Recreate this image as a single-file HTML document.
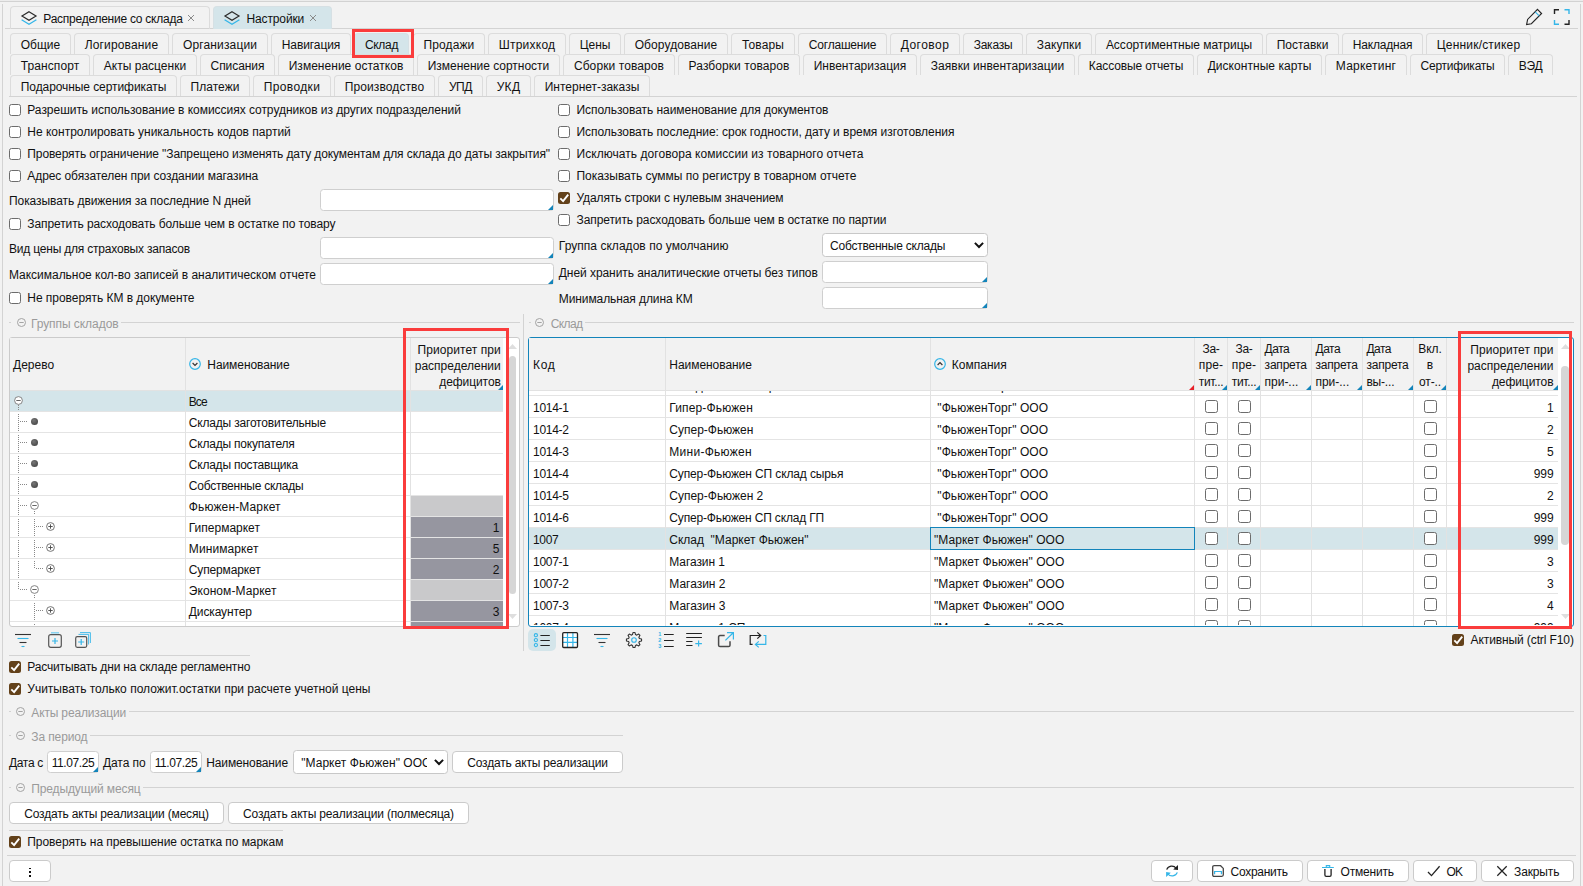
<!DOCTYPE html><html lang="ru"><head><meta charset="utf-8"><title>Настройки</title><style>
*{box-sizing:border-box;margin:0;padding:0}
html,body{width:1583px;height:886px;overflow:hidden;background:#f2f2f2;}
body{position:relative;font-family:"Liberation Sans",sans-serif;font-size:12px;color:#111;letter-spacing:-0.08px}
.a{position:absolute}
.t{position:absolute;white-space:nowrap;line-height:16px;height:16px}
.tab{position:absolute;height:21px;border:1px solid #dcdcdc;border-bottom:none;border-radius:4px 4px 0 0;background:#f2f2f2;text-align:center;line-height:22px;white-space:nowrap}
.cb{position:absolute;width:12px;height:12px;border:1px solid #6c6c6c;border-radius:2.5px;background:#fff}
.cbt{position:absolute;width:13px;height:13px;border:1px solid #6c6c6c;border-radius:2.5px;background:#fff}
.cbc{position:absolute;width:12px;height:12px;border-radius:2.5px;background:#63411a}
.inp{position:absolute;background:#fff;border:1px solid #cfcfcf;border-radius:3.5px}
.tri{position:absolute;width:0;height:0;border-left:5px solid transparent;border-bottom:5px solid #1384ba}
.btn{position:absolute;background:#fff;border:1px solid #cbcbcb;border-radius:4px;text-align:center;white-space:nowrap}
.hl{position:absolute;height:1px;background:#d3d3d3}
.vl{position:absolute;width:1px;background:#d3d3d3}
.lg{position:absolute;white-space:nowrap;color:#9a9a9a;line-height:16px;height:16px}
.red{position:absolute;border:3px solid #fa3c3c}
svg{position:absolute;overflow:visible}
</style></head><body>
<div class="hl" style="left:0px;top:0px;width:1583px;background:#ececec"></div>
<div class="hl" style="left:0px;top:1px;width:1583px;background:#d2d2d2"></div>
<div class="vl" style="left:2px;top:4px;height:882px;"></div>
<div class="vl" style="left:1580px;top:4px;height:882px;"></div>
<div class="hl" style="left:5px;top:28px;width:1573px;"></div>
<div class="a" style="left:10px;top:6px;width:200px;height:23px;border:1px solid #dcdcdc;border-bottom:none;border-radius:4px 4px 0 0"></div>
<svg style="left:21px;top:11px" width="16" height="14" viewBox="0 0 16 14"><path d="M8 0.8 L15 5 L8 9.2 L1 5 Z" fill="none" stroke="#2b2b2b" stroke-width="1.2" stroke-linejoin="miter"/><path d="M0.6 8.7 L8 13.2 L15.4 8.7" fill="none" stroke="#35b6e8" stroke-width="1.3"/></svg>
<div class="t" style="left:43.3px;top:11px;letter-spacing:-0.249px;">Распределение со склада</div>
<svg style="left:188px;top:15px" width="6" height="6" viewBox="0 0 6 6"><path d="M0 0 L6 6 M6 0 L0 6" stroke="#8a8a8a" stroke-width="1"/></svg>
<div class="a" style="left:213px;top:6px;width:119px;height:23px;border:1px solid #d6e0e4;border-bottom:none;border-radius:4px 4px 0 0;background:#d4e5ea"></div>
<svg style="left:224px;top:11px" width="16" height="14" viewBox="0 0 16 14"><path d="M8 0.8 L15 5 L8 9.2 L1 5 Z" fill="none" stroke="#2b2b2b" stroke-width="1.2" stroke-linejoin="miter"/><path d="M0.6 8.7 L8 13.2 L15.4 8.7" fill="none" stroke="#35b6e8" stroke-width="1.3"/></svg>
<div class="t" style="left:246.5px;top:11px;letter-spacing:-0.127px;">Настройки</div>
<svg style="left:310px;top:15px" width="6" height="6" viewBox="0 0 6 6"><path d="M0 0 L6 6 M6 0 L0 6" stroke="#8a8a8a" stroke-width="1"/></svg>
<svg style="left:1525px;top:8px" width="18" height="18" viewBox="0 0 18 18"><path d="M12.5 1.4 L16.6 5.5 L6.4 15.7 L1.6 16.6 L2.6 11.4 Z" fill="none" stroke="#222" stroke-width="1.1" stroke-linejoin="miter"/><path d="M10.2 3.8 L14.2 7.8" stroke="#35b6e8" stroke-width="1.1"/></svg>
<svg style="left:1553px;top:9px" width="17" height="16" viewBox="0 0 17 16"><path d="M1.5 5 V0.8 H6" fill="none" stroke="#222" stroke-width="1.4"/><path d="M11.5 0.8 H16 V5" fill="none" stroke="#35b6e8" stroke-width="1.4"/><path d="M1.5 11 V15.2 H6" fill="none" stroke="#35b6e8" stroke-width="1.4"/><path d="M11.5 15.2 H16 V11" fill="none" stroke="#222" stroke-width="1.4"/></svg>
<div class="tab" style="left:10px;top:33px;width:61px;letter-spacing:0.026px;">Общие</div>
<div class="tab" style="left:74px;top:33px;width:95px;letter-spacing:0.145px;">Логирование</div>
<div class="tab" style="left:172px;top:33px;width:96px;letter-spacing:0.146px;">Организации</div>
<div class="tab" style="left:271px;top:33px;width:80px;letter-spacing:-0.076px;">Навигация</div>
<div class="tab" style="left:354px;top:33px;width:55px;background:#d4e5ea;border-color:#d6e0e4;letter-spacing:-0.307px;">Склад</div>
<div class="tab" style="left:413px;top:33px;width:72px;letter-spacing:0.111px;">Продажи</div>
<div class="tab" style="left:488px;top:33px;width:78px;letter-spacing:0.229px;">Штрихкод</div>
<div class="tab" style="left:569px;top:33px;width:52px;letter-spacing:-0.053px;">Цены</div>
<div class="tab" style="left:624px;top:33px;width:104px;letter-spacing:0.081px;">Оборудование</div>
<div class="tab" style="left:731px;top:33px;width:64px;letter-spacing:0.086px;">Товары</div>
<div class="tab" style="left:798px;top:33px;width:89px;letter-spacing:-0.204px;">Соглашение</div>
<div class="tab" style="left:890px;top:33px;width:70px;letter-spacing:0.484px;">Договор</div>
<div class="tab" style="left:963px;top:33px;width:60px;letter-spacing:-0.252px;">Заказы</div>
<div class="tab" style="left:1026px;top:33px;width:66px;letter-spacing:0.091px;">Закупки</div>
<div class="tab" style="left:1095px;top:33px;width:168px;letter-spacing:-0.026px;">Ассортиментные матрицы</div>
<div class="tab" style="left:1266px;top:33px;width:73px;letter-spacing:0.004px;">Поставки</div>
<div class="tab" style="left:1342px;top:33px;width:81px;letter-spacing:-0.178px;">Накладная</div>
<div class="tab" style="left:1426px;top:33px;width:105px;letter-spacing:0.198px;">Ценник/стикер</div>
<div class="tab" style="left:10px;top:54px;width:80px;letter-spacing:0.098px;">Транспорт</div>
<div class="tab" style="left:93px;top:54px;width:104px;letter-spacing:0.009px;">Акты расценки</div>
<div class="tab" style="left:200px;top:54px;width:75px;letter-spacing:-0.072px;">Списания</div>
<div class="tab" style="left:278px;top:54px;width:136px;letter-spacing:0.029px;">Изменение остатков</div>
<div class="tab" style="left:417px;top:54px;width:143px;letter-spacing:-0.021px;">Изменение сортности</div>
<div class="tab" style="left:563px;top:54px;width:112px;letter-spacing:0.096px;">Сборки товаров</div>
<div class="tab" style="left:678px;top:54px;width:122px;letter-spacing:0.069px;">Разборки товаров</div>
<div class="tab" style="left:803px;top:54px;width:114px;letter-spacing:0.017px;">Инвентаризация</div>
<div class="tab" style="left:920px;top:54px;width:155px;letter-spacing:0.027px;">Заявки инвентаризации</div>
<div class="tab" style="left:1078px;top:54px;width:116px;letter-spacing:-0.116px;">Кассовые отчеты</div>
<div class="tab" style="left:1197px;top:54px;width:125px;letter-spacing:0.044px;">Дисконтные карты</div>
<div class="tab" style="left:1325px;top:54px;width:82px;letter-spacing:0.228px;">Маркетинг</div>
<div class="tab" style="left:1410px;top:54px;width:95px;letter-spacing:-0.243px;">Сертификаты</div>
<div class="tab" style="left:1508px;top:54px;width:45px;letter-spacing:-0.220px;">ВЭД</div>
<div class="tab" style="left:10px;top:75px;width:167px;letter-spacing:-0.078px;">Подарочные сертификаты</div>
<div class="tab" style="left:180px;top:75px;width:70px;letter-spacing:0.047px;">Платежи</div>
<div class="tab" style="left:253px;top:75px;width:78px;letter-spacing:0.378px;">Проводки</div>
<div class="tab" style="left:334px;top:75px;width:101px;letter-spacing:0.104px;">Производство</div>
<div class="tab" style="left:438px;top:75px;width:45px;letter-spacing:-0.392px;">УПД</div>
<div class="tab" style="left:486px;top:75px;width:45px;letter-spacing:0.317px;">УКД</div>
<div class="tab" style="left:534px;top:75px;width:116px;letter-spacing:-0.015px;">Интернет-заказы</div>
<div class="hl" style="left:9px;top:96px;width:1568px;"></div>
<div class="a" style="left:3px;top:97px;width:1577px;height:789px;background:#f2f2f2"></div>
<div class="red" style="left:352px;top:29px;width:62px;height:29px"></div>
<div class="cb" style="left:9px;top:104px"></div>
<div class="t" style="left:27.3px;top:102px;letter-spacing:-0.033px;">Разрешить использование в комиссиях сотрудников из других подразделений</div>
<div class="cb" style="left:9px;top:126px"></div>
<div class="t" style="left:27.3px;top:124px;letter-spacing:-0.001px;">Не контролировать уникальность кодов партий</div>
<div class="cb" style="left:9px;top:148px"></div>
<div class="t" style="left:27.3px;top:146px;letter-spacing:-0.101px;">Проверять ограничение "Запрещено изменять дату документам для склада до даты закрытия"</div>
<div class="cb" style="left:9px;top:170px"></div>
<div class="t" style="left:27.3px;top:168px;letter-spacing:-0.079px;">Адрес обязателен при создании магазина</div>
<div class="t" style="left:9px;top:193px;letter-spacing:-0.067px;">Показывать движения за последние N дней</div>
<div class="cb" style="left:9px;top:218px"></div>
<div class="t" style="left:27.3px;top:216px;letter-spacing:-0.104px;">Запретить расходовать больше чем в остатке по товару</div>
<div class="t" style="left:9px;top:241px;letter-spacing:-0.204px;">Вид цены для страховых запасов</div>
<div class="t" style="left:9px;top:267px;letter-spacing:-0.025px;">Максимальное кол-во записей в аналитическом отчете</div>
<div class="cb" style="left:9px;top:292px"></div>
<div class="t" style="left:27.3px;top:290px;letter-spacing:-0.033px;">Не проверять КМ в документе</div>
<div class="inp" style="left:320px;top:189px;width:234px;height:22px;"></div>
<div class="tri" style="left:548px;top:205px;"></div>
<div class="inp" style="left:320px;top:237px;width:234px;height:22px;"></div>
<div class="tri" style="left:548px;top:253px;"></div>
<div class="inp" style="left:320px;top:263px;width:234px;height:22px;"></div>
<div class="tri" style="left:548px;top:279px;"></div>
<div class="cb" style="left:558px;top:104px"></div>
<div class="t" style="left:576.5px;top:102px;letter-spacing:-0.047px;">Использовать наименование для документов</div>
<div class="cb" style="left:558px;top:126px"></div>
<div class="t" style="left:576.5px;top:124px;letter-spacing:-0.050px;">Использовать последние: срок годности, дату и время изготовления</div>
<div class="cb" style="left:558px;top:148px"></div>
<div class="t" style="left:576.5px;top:146px;letter-spacing:0.054px;">Исключать договора комиссии из товарного отчета</div>
<div class="cb" style="left:558px;top:170px"></div>
<div class="t" style="left:576.5px;top:168px;letter-spacing:-0.016px;">Показывать суммы по регистру в товарном отчете</div>
<div class="cbc" style="left:558px;top:192px"><svg style="left:0;top:0" width="12" height="12" viewBox="0 0 12 12"><path d="M2.3 6.4 L5.1 9.1 L10.2 2.7" fill="none" stroke="#fff" stroke-width="1.9" stroke-linecap="butt"/></svg></div>
<div class="t" style="left:576.5px;top:190px;letter-spacing:-0.110px;">Удалять строки с нулевым значением</div>
<div class="cb" style="left:558px;top:214px"></div>
<div class="t" style="left:576.5px;top:212px;letter-spacing:-0.087px;">Запретить расходовать больше чем в остатке по партии</div>
<div class="t" style="left:558.8px;top:238px;letter-spacing:0.035px;">Группа складов по умолчанию</div>
<div class="t" style="left:558.8px;top:265px;letter-spacing:-0.061px;">Дней хранить аналитические отчеты без типов</div>
<div class="t" style="left:558.8px;top:291px;letter-spacing:-0.094px;">Минимальная длина КМ</div>
<div class="inp" style="left:822px;top:233px;width:166px;height:24px;border-color:#c8c8c8"></div>
<div class="t" style="left:830px;top:238px;width:138px;overflow:hidden;letter-spacing:-0.220px;">Собственные склады</div>
<svg style="left:974px;top:242.2px" width="10" height="7" viewBox="0 0 10 7"><path d="M0.9 0.9 L5 5 L9.1 0.9" fill="none" stroke="#111" stroke-width="2"/></svg>
<div class="inp" style="left:822px;top:261px;width:166px;height:22px;"></div>
<div class="tri" style="left:982px;top:277px;"></div>
<div class="inp" style="left:822px;top:287px;width:166px;height:22px;"></div>
<div class="tri" style="left:982px;top:303px;"></div>
<div class="hl" style="left:9px;top:322px;width:2px;"></div>
<div class="hl" style="left:121px;top:322px;width:399px;"></div>
<svg style="left:16.5px;top:318.2px" width="9" height="9" viewBox="0 0 9 9"><circle cx="4.5" cy="4.5" r="4" fill="none" stroke="#a4a4a4" stroke-width="1"/><path d="M2.3 4.5 H6.7" stroke="#a4a4a4" stroke-width="1"/></svg>
<div class="lg" style="left:30.9px;top:316px;letter-spacing:-0.053px;">Группы складов</div>
<div class="hl" style="left:529px;top:322px;width:2px;"></div>
<div class="hl" style="left:585px;top:322px;width:989px;"></div>
<svg style="left:535.0px;top:318.2px" width="9" height="9" viewBox="0 0 9 9"><circle cx="4.5" cy="4.5" r="4" fill="none" stroke="#a4a4a4" stroke-width="1"/><path d="M2.3 4.5 H6.7" stroke="#a4a4a4" stroke-width="1"/></svg>
<div class="lg" style="left:550.7px;top:316px;letter-spacing:-0.607px;">Склад</div>
<div class="a" style="left:9px;top:337px;width:511px;height:290px;background:#fff;border:1px solid #cbcbcb;border-radius:3px"></div>
<div class="a" style="left:10px;top:338px;width:493px;height:53px;background:#f2f2f2"></div>
<div class="vl" style="left:185px;top:338px;height:288px;background:#e2e2e2"></div>
<div class="vl" style="left:410px;top:338px;height:288px;background:#e2e2e2"></div>
<div class="hl" style="left:10px;top:390px;width:493px;background:#e2e2e2"></div>
<div class="t" style="left:13px;top:357px;letter-spacing:0.006px;">Дерево</div>
<svg style="left:189px;top:357.7px" width="12" height="12" viewBox="0 0 12 12"><circle cx="6" cy="6" r="5.3" fill="none" stroke="#35b6e8" stroke-width="1.2"/><path d="M3.6 5 L6 7.4 L8.4 5" fill="none" stroke="#333" stroke-width="1.2"/></svg>
<div class="t" style="left:207.3px;top:357px;letter-spacing:-0.074px;">Наименование</div>
<div class="t" style="right:1082.2px;top:342px;text-align:right;letter-spacing:0.069px;">Приоритет при</div>
<div class="t" style="right:1082.2px;top:358px;text-align:right;letter-spacing:0.014px;">распределении</div>
<div class="t" style="right:1082.2px;top:374px;text-align:right;letter-spacing:-0.072px;">дефицитов</div>
<div class="tri" style="left:498px;top:385px;"></div>
<div class="a" style="left:10px;top:391px;width:493px;height:21px;background:#d4e5ea"></div>
<div class="hl" style="left:10px;top:411px;width:493px;background:#e4e4e4"></div>
<div class="t" style="left:188.8px;top:393.5px;letter-spacing:-0.962px;">Все</div>
<div class="hl" style="left:10px;top:432px;width:493px;background:#e4e4e4"></div>
<div class="t" style="left:188.8px;top:414.5px;letter-spacing:-0.188px;">Склады заготовительные</div>
<div class="hl" style="left:10px;top:453px;width:493px;background:#e4e4e4"></div>
<div class="t" style="left:188.8px;top:435.5px;letter-spacing:-0.206px;">Склады покупателя</div>
<div class="hl" style="left:10px;top:474px;width:493px;background:#e4e4e4"></div>
<div class="t" style="left:188.8px;top:456.5px;letter-spacing:-0.226px;">Склады поставщика</div>
<div class="hl" style="left:10px;top:495px;width:493px;background:#e4e4e4"></div>
<div class="t" style="left:188.8px;top:477.5px;letter-spacing:-0.248px;">Собственные склады</div>
<div class="hl" style="left:10px;top:516px;width:493px;background:#e4e4e4"></div>
<div class="t" style="left:188.8px;top:498.5px;letter-spacing:0.131px;">Фьюжен-Маркет</div>
<div class="a" style="left:411px;top:496px;width:92px;height:20px;background:#c9c9cb"></div>
<div class="hl" style="left:10px;top:537px;width:493px;background:#e4e4e4"></div>
<div class="t" style="left:188.8px;top:519.5px;letter-spacing:-0.004px;">Гипермаркет</div>
<div class="a" style="left:411px;top:517px;width:92px;height:20px;background:#9696a0"></div>
<div class="t" style="right:1083.7px;top:519.5px;text-align:right;">1</div>
<div class="hl" style="left:10px;top:558px;width:493px;background:#e4e4e4"></div>
<div class="t" style="left:188.8px;top:540.5px;letter-spacing:0.100px;">Минимаркет</div>
<div class="a" style="left:411px;top:538px;width:92px;height:20px;background:#9696a0"></div>
<div class="t" style="right:1083.7px;top:540.5px;text-align:right;">5</div>
<div class="hl" style="left:10px;top:579px;width:493px;background:#e4e4e4"></div>
<div class="t" style="left:188.8px;top:561.5px;letter-spacing:-0.142px;">Супермаркет</div>
<div class="a" style="left:411px;top:559px;width:92px;height:20px;background:#9696a0"></div>
<div class="t" style="right:1083.7px;top:561.5px;text-align:right;">2</div>
<div class="hl" style="left:10px;top:600px;width:493px;background:#e4e4e4"></div>
<div class="t" style="left:188.8px;top:582.5px;letter-spacing:0.063px;">Эконом-Маркет</div>
<div class="a" style="left:411px;top:580px;width:92px;height:20px;background:#c9c9cb"></div>
<div class="hl" style="left:10px;top:621px;width:493px;background:#e4e4e4"></div>
<div class="t" style="left:188.8px;top:603.5px;letter-spacing:-0.112px;">Дискаунтер</div>
<div class="a" style="left:411px;top:601px;width:92px;height:20px;background:#9696a0"></div>
<div class="t" style="right:1083.7px;top:603.5px;text-align:right;">3</div>
<div class="a" style="left:411px;top:622px;width:92px;height:4px;background:#9696a0"></div>
<div class="vl" style="left:185px;top:338px;height:288px;background:#e2e2e2"></div>
<div class="vl" style="left:410px;top:338px;height:288px;background:#e2e2e2"></div>
<div class="a" style="left:18px;top:405px;width:1px;height:5px;background:repeating-linear-gradient(to bottom,#888 0 1px,transparent 1px 2px)"></div>
<div class="a" style="left:18px;top:414px;width:1px;height:17px;background:repeating-linear-gradient(to bottom,#888 0 1px,transparent 1px 2px)"></div>
<div class="a" style="left:18px;top:435px;width:1px;height:17px;background:repeating-linear-gradient(to bottom,#888 0 1px,transparent 1px 2px)"></div>
<div class="a" style="left:18px;top:456px;width:1px;height:17px;background:repeating-linear-gradient(to bottom,#888 0 1px,transparent 1px 2px)"></div>
<div class="a" style="left:18px;top:477px;width:1px;height:17px;background:repeating-linear-gradient(to bottom,#888 0 1px,transparent 1px 2px)"></div>
<div class="a" style="left:18px;top:498px;width:1px;height:17px;background:repeating-linear-gradient(to bottom,#888 0 1px,transparent 1px 2px)"></div>
<div class="a" style="left:18px;top:519px;width:1px;height:17px;background:repeating-linear-gradient(to bottom,#888 0 1px,transparent 1px 2px)"></div>
<div class="a" style="left:18px;top:540px;width:1px;height:17px;background:repeating-linear-gradient(to bottom,#888 0 1px,transparent 1px 2px)"></div>
<div class="a" style="left:18px;top:561px;width:1px;height:17px;background:repeating-linear-gradient(to bottom,#888 0 1px,transparent 1px 2px)"></div>
<div class="a" style="left:18px;top:582px;width:1px;height:7px;background:repeating-linear-gradient(to bottom,#888 0 1px,transparent 1px 2px)"></div>
<div class="a" style="left:20px;top:421px;height:1px;width:7px;background:repeating-linear-gradient(to right,#888 0 1px,transparent 1px 2px)"></div>
<div class="a" style="left:31.0px;top:418.0px;width:7px;height:7px;border-radius:50%;background:radial-gradient(circle at 40% 35%,#777,#3a3a3a)"></div>
<div class="a" style="left:20px;top:442px;height:1px;width:7px;background:repeating-linear-gradient(to right,#888 0 1px,transparent 1px 2px)"></div>
<div class="a" style="left:31.0px;top:439.0px;width:7px;height:7px;border-radius:50%;background:radial-gradient(circle at 40% 35%,#777,#3a3a3a)"></div>
<div class="a" style="left:20px;top:463px;height:1px;width:7px;background:repeating-linear-gradient(to right,#888 0 1px,transparent 1px 2px)"></div>
<div class="a" style="left:31.0px;top:460.0px;width:7px;height:7px;border-radius:50%;background:radial-gradient(circle at 40% 35%,#777,#3a3a3a)"></div>
<div class="a" style="left:20px;top:484px;height:1px;width:7px;background:repeating-linear-gradient(to right,#888 0 1px,transparent 1px 2px)"></div>
<div class="a" style="left:31.0px;top:481.0px;width:7px;height:7px;border-radius:50%;background:radial-gradient(circle at 40% 35%,#777,#3a3a3a)"></div>
<svg style="left:14.0px;top:395.8px" width="9" height="9" viewBox="0 0 9 9"><circle cx="4.5" cy="4.5" r="3.9" fill="#fff" stroke="#777" stroke-width="0.9"/><path d="M2.3 4.5 H6.7" stroke="#555" stroke-width="0.9"/></svg>
<div class="a" style="left:20px;top:505px;height:1px;width:7px;background:repeating-linear-gradient(to right,#888 0 1px,transparent 1px 2px)"></div>
<svg style="left:30.0px;top:501.0px" width="9" height="9" viewBox="0 0 9 9"><circle cx="4.5" cy="4.5" r="3.9" fill="#fff" stroke="#777" stroke-width="0.9"/><path d="M2.3 4.5 H6.7" stroke="#555" stroke-width="0.9"/></svg>
<div class="a" style="left:34px;top:511px;width:1px;height:4px;background:repeating-linear-gradient(to bottom,#888 0 1px,transparent 1px 2px)"></div>
<div class="a" style="left:34px;top:519px;width:1px;height:17px;background:repeating-linear-gradient(to bottom,#888 0 1px,transparent 1px 2px)"></div>
<div class="a" style="left:34px;top:540px;width:1px;height:17px;background:repeating-linear-gradient(to bottom,#888 0 1px,transparent 1px 2px)"></div>
<div class="a" style="left:34px;top:561px;width:1px;height:7px;background:repeating-linear-gradient(to bottom,#888 0 1px,transparent 1px 2px)"></div>
<div class="a" style="left:36px;top:526px;height:1px;width:7px;background:repeating-linear-gradient(to right,#888 0 1px,transparent 1px 2px)"></div>
<svg style="left:46.0px;top:522.0px" width="9" height="9" viewBox="0 0 9 9"><circle cx="4.5" cy="4.5" r="3.9" fill="#fff" stroke="#666" stroke-width="0.9"/><path d="M2.3 4.5 H6.7 M4.5 2.3 V6.7" stroke="#444" stroke-width="0.9"/></svg>
<div class="a" style="left:36px;top:547px;height:1px;width:7px;background:repeating-linear-gradient(to right,#888 0 1px,transparent 1px 2px)"></div>
<svg style="left:46.0px;top:543.0px" width="9" height="9" viewBox="0 0 9 9"><circle cx="4.5" cy="4.5" r="3.9" fill="#fff" stroke="#666" stroke-width="0.9"/><path d="M2.3 4.5 H6.7 M4.5 2.3 V6.7" stroke="#444" stroke-width="0.9"/></svg>
<div class="a" style="left:36px;top:568px;height:1px;width:7px;background:repeating-linear-gradient(to right,#888 0 1px,transparent 1px 2px)"></div>
<svg style="left:46.0px;top:564.0px" width="9" height="9" viewBox="0 0 9 9"><circle cx="4.5" cy="4.5" r="3.9" fill="#fff" stroke="#666" stroke-width="0.9"/><path d="M2.3 4.5 H6.7 M4.5 2.3 V6.7" stroke="#444" stroke-width="0.9"/></svg>
<div class="a" style="left:20px;top:589px;height:1px;width:7px;background:repeating-linear-gradient(to right,#888 0 1px,transparent 1px 2px)"></div>
<svg style="left:30.0px;top:585.0px" width="9" height="9" viewBox="0 0 9 9"><circle cx="4.5" cy="4.5" r="3.9" fill="#fff" stroke="#777" stroke-width="0.9"/><path d="M2.3 4.5 H6.7" stroke="#555" stroke-width="0.9"/></svg>
<div class="a" style="left:34px;top:595px;width:1px;height:4px;background:repeating-linear-gradient(to bottom,#888 0 1px,transparent 1px 2px)"></div>
<div class="a" style="left:34px;top:603px;width:1px;height:17px;background:repeating-linear-gradient(to bottom,#888 0 1px,transparent 1px 2px)"></div>
<div class="a" style="left:34px;top:624px;width:1px;height:2px;background:repeating-linear-gradient(to bottom,#888 0 1px,transparent 1px 2px)"></div>
<div class="a" style="left:36px;top:610px;height:1px;width:7px;background:repeating-linear-gradient(to right,#888 0 1px,transparent 1px 2px)"></div>
<svg style="left:46.0px;top:606.0px" width="9" height="9" viewBox="0 0 9 9"><circle cx="4.5" cy="4.5" r="3.9" fill="#fff" stroke="#666" stroke-width="0.9"/><path d="M2.3 4.5 H6.7 M4.5 2.3 V6.7" stroke="#444" stroke-width="0.9"/></svg>
<svg style="left:508px;top:344px" width="9" height="5" viewBox="0 0 9 5"><path d="M0 5 L4.5 0 L9 5 Z" fill="#dedede"/></svg>
<svg style="left:508px;top:614px" width="9" height="5" viewBox="0 0 9 5"><path d="M0 0 L4.5 5 L9 0 Z" fill="#dedede"/></svg>
<div class="a" style="left:509px;top:356px;width:7px;height:238px;background:#d6d6d6;border-radius:3.5px"></div>
<div class="red" style="left:403px;top:328px;width:106px;height:301px"></div>
<svg style="left:15px;top:632px" width="17" height="16" viewBox="0 0 17 16"><path d="M0 2.5 H16" stroke="#333" stroke-width="1.1"/><path d="M2.5 6.5 H13.5" stroke="#35b6e8" stroke-width="1.1"/><path d="M4.5 10.5 H11.5" stroke="#333" stroke-width="1.1"/><path d="M6.5 14.5 H9.5" stroke="#35b6e8" stroke-width="1.1"/></svg>
<svg style="left:48px;top:632px" width="14" height="16" viewBox="0 0 14 16"><path d="M3 0.8 H11" stroke="#7fd0f0" stroke-width="1.4"/><rect x="0.7" y="2.7" width="12.6" height="12.6" rx="2" fill="none" stroke="#555" stroke-width="1.2"/><path d="M4 9 H10 M7 6 V12" stroke="#35b6e8" stroke-width="1.2"/></svg>
<svg style="left:75px;top:632px" width="16" height="16" viewBox="0 0 16 16"><path d="M5 0.6 H15.4 V11 M3.5 2.4 H13.6 V12.5" fill="none" stroke="#35b6e8" stroke-width="0.9"/><rect x="0.7" y="4.7" width="11" height="10.6" rx="1.5" fill="#f2f2f2" stroke="#555" stroke-width="1.2"/><path d="M3.2 10 H9.2 M6.2 7 V13" stroke="#35b6e8" stroke-width="1.2"/></svg>
<div class="hl" style="left:9px;top:655px;width:241px;"></div>
<div class="vl" style="left:523px;top:314px;height:337px;"></div>
<div class="a" style="left:528px;top:337px;width:1046px;height:290px;background:#fff;border:1px solid #1384ba;border-radius:3px"></div>
<div class="a" style="left:529px;top:338px;width:1029px;height:53px;background:#f2f2f2"></div>
<div class="hl" style="left:529px;top:390px;width:1029px;background:#e2e2e2"></div>
<div class="t" style="left:533px;top:357px;letter-spacing:0.698px;">Код</div>
<div class="t" style="left:669.3px;top:357px;letter-spacing:-0.049px;">Наименование</div>
<svg style="left:934px;top:357.7px" width="12" height="12" viewBox="0 0 12 12"><circle cx="6" cy="6" r="5.3" fill="none" stroke="#35b6e8" stroke-width="1.2"/><path d="M3.6 7 L6 4.6 L8.4 7" fill="none" stroke="#333" stroke-width="1.2"/></svg>
<div class="t" style="left:951.8px;top:357px;letter-spacing:0.010px;">Компания</div>
<div class="t" style="left:1171px;width:80px;text-align:center;top:341.0px;letter-spacing:-0.341px;">За-</div>
<div class="t" style="left:1171px;width:80px;text-align:center;top:357.3px;letter-spacing:0.164px;">пре-</div>
<div class="t" style="left:1171px;width:80px;text-align:center;top:373.6px;letter-spacing:-0.346px;">тит...</div>
<div class="t" style="left:1204px;width:80px;text-align:center;top:341.0px;letter-spacing:-0.341px;">За-</div>
<div class="t" style="left:1204px;width:80px;text-align:center;top:357.3px;letter-spacing:0.164px;">пре-</div>
<div class="t" style="left:1204px;width:80px;text-align:center;top:373.6px;letter-spacing:-0.346px;">тит...</div>
<div class="t" style="left:1264.6px;top:341.0px;letter-spacing:-0.495px;">Дата</div>
<div class="t" style="left:1264.6px;top:357.3px;letter-spacing:-0.210px;">запрета</div>
<div class="t" style="left:1264.6px;top:373.6px;letter-spacing:-0.025px;">при-...</div>
<div class="t" style="left:1315.5px;top:341.0px;letter-spacing:-0.495px;">Дата</div>
<div class="t" style="left:1315.5px;top:357.3px;letter-spacing:-0.210px;">запрета</div>
<div class="t" style="left:1315.5px;top:373.6px;letter-spacing:-0.025px;">при-...</div>
<div class="t" style="left:1366.4px;top:341.0px;letter-spacing:-0.495px;">Дата</div>
<div class="t" style="left:1366.4px;top:357.3px;letter-spacing:-0.210px;">запрета</div>
<div class="t" style="left:1366.4px;top:373.6px;letter-spacing:-0.183px;">вы-...</div>
<div class="t" style="left:1390px;width:80px;text-align:center;top:341.0px;">Вкл.</div>
<div class="t" style="left:1390px;width:80px;text-align:center;top:357.3px;">в</div>
<div class="t" style="left:1390px;width:80px;text-align:center;top:373.6px;">от-..</div>
<div class="t" style="right:29.5px;top:342px;text-align:right;letter-spacing:0.069px;">Приоритет при</div>
<div class="t" style="right:29.5px;top:358px;text-align:right;letter-spacing:0.014px;">распределении</div>
<div class="t" style="right:29.5px;top:374px;text-align:right;letter-spacing:-0.072px;">дефицитов</div>
<div class="tri" style="left:1189px;top:385px;border-bottom-color:#e8212b"></div>
<div class="tri" style="left:1222px;top:385px;"></div>
<div class="tri" style="left:1255px;top:385px;"></div>
<div class="tri" style="left:1306px;top:385px;"></div>
<div class="tri" style="left:1357px;top:385px;"></div>
<div class="tri" style="left:1408px;top:385px;"></div>
<div class="tri" style="left:1441px;top:385px;"></div>
<div class="tri" style="left:1553px;top:385px;"></div>
<div class="hl" style="left:529px;top:395px;width:1029px;background:#e4e4e4"></div>
<div class="hl" style="left:529px;top:417px;width:1029px;background:#e4e4e4"></div>
<div class="t" style="left:533px;top:400px;letter-spacing:-0.296px;">1014-1</div>
<div class="t" style="left:669.3px;top:400px;letter-spacing:0.139px;">Гипер-Фьюжен</div>
<div class="t" style="left:937.3px;top:400px;letter-spacing:0.085px;">"ФьюженТорг" ООО</div>
<div class="cbt" style="left:1205px;top:400px"></div>
<div class="cbt" style="left:1238px;top:400px"></div>
<div class="cbt" style="left:1424px;top:400px"></div>
<div class="t" style="right:29.5px;top:400px;text-align:right;">1</div>
<div class="hl" style="left:529px;top:439px;width:1029px;background:#e4e4e4"></div>
<div class="t" style="left:533px;top:422px;letter-spacing:-0.296px;">1014-2</div>
<div class="t" style="left:669.3px;top:422px;letter-spacing:0.002px;">Супер-Фьюжен</div>
<div class="t" style="left:937.3px;top:422px;letter-spacing:0.085px;">"ФьюженТорг" ООО</div>
<div class="cbt" style="left:1205px;top:422px"></div>
<div class="cbt" style="left:1238px;top:422px"></div>
<div class="cbt" style="left:1424px;top:422px"></div>
<div class="t" style="right:29.5px;top:422px;text-align:right;">2</div>
<div class="hl" style="left:529px;top:461px;width:1029px;background:#e4e4e4"></div>
<div class="t" style="left:533px;top:444px;letter-spacing:-0.296px;">1014-3</div>
<div class="t" style="left:669.3px;top:444px;letter-spacing:0.273px;">Мини-Фьюжен</div>
<div class="t" style="left:937.3px;top:444px;letter-spacing:0.085px;">"ФьюженТорг" ООО</div>
<div class="cbt" style="left:1205px;top:444px"></div>
<div class="cbt" style="left:1238px;top:444px"></div>
<div class="cbt" style="left:1424px;top:444px"></div>
<div class="t" style="right:29.5px;top:444px;text-align:right;">5</div>
<div class="hl" style="left:529px;top:483px;width:1029px;background:#e4e4e4"></div>
<div class="t" style="left:533px;top:466px;letter-spacing:-0.296px;">1014-4</div>
<div class="t" style="left:669.3px;top:466px;letter-spacing:-0.129px;">Супер-Фьюжен СП склад сырья</div>
<div class="t" style="left:937.3px;top:466px;letter-spacing:0.085px;">"ФьюженТорг" ООО</div>
<div class="cbt" style="left:1205px;top:466px"></div>
<div class="cbt" style="left:1238px;top:466px"></div>
<div class="cbt" style="left:1424px;top:466px"></div>
<div class="t" style="right:29.5px;top:466px;text-align:right;">999</div>
<div class="hl" style="left:529px;top:505px;width:1029px;background:#e4e4e4"></div>
<div class="t" style="left:533px;top:488px;letter-spacing:-0.296px;">1014-5</div>
<div class="t" style="left:669.3px;top:488px;letter-spacing:-0.007px;">Супер-Фьюжен 2</div>
<div class="t" style="left:937.3px;top:488px;letter-spacing:0.085px;">"ФьюженТорг" ООО</div>
<div class="cbt" style="left:1205px;top:488px"></div>
<div class="cbt" style="left:1238px;top:488px"></div>
<div class="cbt" style="left:1424px;top:488px"></div>
<div class="t" style="right:29.5px;top:488px;text-align:right;">2</div>
<div class="hl" style="left:529px;top:527px;width:1029px;background:#e4e4e4"></div>
<div class="t" style="left:533px;top:510px;letter-spacing:-0.296px;">1014-6</div>
<div class="t" style="left:669.3px;top:510px;letter-spacing:-0.157px;">Супер-Фьюжен СП склад ГП</div>
<div class="t" style="left:937.3px;top:510px;letter-spacing:0.085px;">"ФьюженТорг" ООО</div>
<div class="cbt" style="left:1205px;top:510px"></div>
<div class="cbt" style="left:1238px;top:510px"></div>
<div class="cbt" style="left:1424px;top:510px"></div>
<div class="t" style="right:29.5px;top:510px;text-align:right;">999</div>
<div class="a" style="left:529px;top:528px;width:1029px;height:21px;background:#d4e5ea"></div>
<div class="hl" style="left:529px;top:549px;width:1029px;background:#e4e4e4"></div>
<div class="t" style="left:533px;top:532px;letter-spacing:-0.351px;">1007</div>
<div class="t" style="left:669.3px;top:532px;letter-spacing:-0.012px;">Склад&nbsp; "Маркет Фьюжен"</div>
<div class="cbt" style="left:1205px;top:532px"></div>
<div class="cbt" style="left:1238px;top:532px"></div>
<div class="cbt" style="left:1424px;top:532px"></div>
<div class="t" style="right:29.5px;top:532px;text-align:right;">999</div>
<div class="hl" style="left:529px;top:571px;width:1029px;background:#e4e4e4"></div>
<div class="t" style="left:533px;top:554px;letter-spacing:-0.296px;">1007-1</div>
<div class="t" style="left:669.3px;top:554px;letter-spacing:-0.077px;">Магазин 1</div>
<div class="t" style="left:934px;top:554px;letter-spacing:0.047px;">"Маркет Фьюжен" ООО</div>
<div class="cbt" style="left:1205px;top:554px"></div>
<div class="cbt" style="left:1238px;top:554px"></div>
<div class="cbt" style="left:1424px;top:554px"></div>
<div class="t" style="right:29.5px;top:554px;text-align:right;">3</div>
<div class="hl" style="left:529px;top:593px;width:1029px;background:#e4e4e4"></div>
<div class="t" style="left:533px;top:576px;letter-spacing:-0.296px;">1007-2</div>
<div class="t" style="left:669.3px;top:576px;letter-spacing:-0.022px;">Магазин 2</div>
<div class="t" style="left:934px;top:576px;letter-spacing:0.047px;">"Маркет Фьюжен" ООО</div>
<div class="cbt" style="left:1205px;top:576px"></div>
<div class="cbt" style="left:1238px;top:576px"></div>
<div class="cbt" style="left:1424px;top:576px"></div>
<div class="t" style="right:29.5px;top:576px;text-align:right;">3</div>
<div class="hl" style="left:529px;top:615px;width:1029px;background:#e4e4e4"></div>
<div class="t" style="left:533px;top:598px;letter-spacing:-0.296px;">1007-3</div>
<div class="t" style="left:669.3px;top:598px;letter-spacing:-0.022px;">Магазин 3</div>
<div class="t" style="left:934px;top:598px;letter-spacing:0.047px;">"Маркет Фьюжен" ООО</div>
<div class="cbt" style="left:1205px;top:598px"></div>
<div class="cbt" style="left:1238px;top:598px"></div>
<div class="cbt" style="left:1424px;top:598px"></div>
<div class="t" style="right:29.5px;top:598px;text-align:right;">4</div>
<div class="vl" style="left:665px;top:338px;height:288px;background:#e2e2e2"></div>
<div class="vl" style="left:930px;top:338px;height:288px;background:#e2e2e2"></div>
<div class="vl" style="left:1194px;top:338px;height:288px;background:#e2e2e2"></div>
<div class="vl" style="left:1227px;top:338px;height:288px;background:#e2e2e2"></div>
<div class="vl" style="left:1260px;top:338px;height:288px;background:#e2e2e2"></div>
<div class="vl" style="left:1311px;top:338px;height:288px;background:#e2e2e2"></div>
<div class="vl" style="left:1362px;top:338px;height:288px;background:#e2e2e2"></div>
<div class="vl" style="left:1413px;top:338px;height:288px;background:#e2e2e2"></div>
<div class="vl" style="left:1446px;top:338px;height:288px;background:#e2e2e2"></div>
<div class="a" style="left:930px;top:527px;width:265px;height:23px;border:1px solid #1384ba;background:#d4e5ea"></div>
<div class="t" style="left:934px;top:532px;letter-spacing:0.047px;">"Маркет Фьюжен" ООО</div>
<div class="a" style="left:529px;top:616px;width:1029px;height:9px;overflow:hidden"><div class="t" style="left:4px;top:4px;letter-spacing:-0.296px;">1007-4</div><div class="t" style="left:140.3px;top:4px">Магазин 1 СП</div><div class="t" style="left:405px;top:4px;letter-spacing:0.047px;">"Маркет Фьюжен" ООО</div><div class="t" style="right:4.5px;top:4px">999</div><div class="cbt" style="left:676px;top:4px"></div><div class="cbt" style="left:709px;top:4px"></div><div class="cbt" style="left:895px;top:4px"></div></div>
<div class="a" style="left:529px;top:391px;width:1029px;height:4px;overflow:hidden"><div class="t" style="left:4px;top:-13px">1014</div><div class="t" style="left:140.3px;top:-13px;letter-spacing:-0.295px;">Склад&nbsp; "ФьюженТорг"</div><div class="t" style="left:408.3px;top:-13px;letter-spacing:0.085px;">"ФьюженТорг" ООО</div></div>
<svg style="left:1561px;top:344px" width="9" height="5" viewBox="0 0 9 5"><path d="M0 5 L4.5 0 L9 5 Z" fill="#dedede"/></svg>
<svg style="left:1561px;top:614px" width="9" height="5" viewBox="0 0 9 5"><path d="M0 0 L4.5 5 L9 0 Z" fill="#dedede"/></svg>
<div class="a" style="left:1561px;top:366px;width:8px;height:179px;background:#d6d6d6;border-radius:4px"></div>
<div class="red" style="left:1458px;top:331px;width:114px;height:298px"></div>
<div class="a" style="left:528px;top:629px;width:28px;height:22px;background:#d4e5ea;border-radius:5px"></div>
<svg style="left:533px;top:632px" width="18" height="16" viewBox="0 0 18 16"><g fill="none" stroke="#35b6e8" stroke-width="1.1"><circle cx="2.9" cy="3.2" r="1.6"/><circle cx="2.9" cy="8.1" r="1.6"/><circle cx="2.9" cy="13.1" r="1.6"/></g><path d="M7.4 3.5 H16.8 M7.4 8.5 H16.8 M7.4 13.5 H16.8" stroke="#222" stroke-width="1.2"/></svg>
<svg style="left:562px;top:632px" width="16" height="16" viewBox="0 0 16 16"><rect x="0.7" y="0.7" width="14.8" height="14.8" fill="#fff"/><path d="M5.5 1 V15 M10.9 1 V15 M1 5.5 H15 M1 10.4 H15" stroke="#35b6e8" stroke-width="1.2"/><rect x="0.7" y="0.7" width="14.8" height="14.8" rx="1" fill="none" stroke="#222" stroke-width="1.3"/></svg>
<svg style="left:594px;top:632px" width="17" height="16" viewBox="0 0 17 16"><path d="M0 2.5 H16" stroke="#333" stroke-width="1.1"/><path d="M2.5 6.5 H13.5" stroke="#35b6e8" stroke-width="1.1"/><path d="M4.5 10.5 H11.5" stroke="#333" stroke-width="1.1"/><path d="M6.5 14.5 H9.5" stroke="#35b6e8" stroke-width="1.1"/></svg>
<svg style="left:626px;top:632px" width="16" height="16" viewBox="0 0 16 16"><path d="M15.55 7.09 L15.55 8.91 L13.39 9.51 L12.88 10.75 L13.98 12.69 L12.69 13.98 L10.75 12.88 L9.51 13.39 L8.91 15.55 L7.09 15.55 L6.49 13.39 L5.25 12.88 L3.31 13.98 L2.02 12.69 L3.12 10.75 L2.61 9.51 L0.45 8.91 L0.45 7.09 L2.61 6.49 L3.12 5.25 L2.02 3.31 L3.31 2.02 L5.25 3.12 L6.49 2.61 L7.09 0.45 L8.91 0.45 L9.51 2.61 L10.75 3.12 L12.69 2.02 L13.98 3.31 L12.88 5.25 L13.39 6.49 Z" fill="none" stroke="#333" stroke-width="1.1" stroke-linejoin="round"/><circle cx="8" cy="8" r="2.3" fill="none" stroke="#35b6e8" stroke-width="1.1"/></svg>
<svg style="left:658px;top:632px" width="17" height="17" viewBox="0 0 17 17"><path d="M6 2.5 H15.7 M6 8.5 H15.7 M6 14.5 H15.7" stroke="#222" stroke-width="1.2"/><text x="0.3" y="4.3" font-family="Liberation Sans,sans-serif" font-size="5.5" font-weight="bold" fill="#35b6e8">1</text><text x="0.3" y="10.3" font-family="Liberation Sans,sans-serif" font-size="5.5" font-weight="bold" fill="#35b6e8">2</text><text x="0.3" y="16.2" font-family="Liberation Sans,sans-serif" font-size="5.5" font-weight="bold" fill="#35b6e8">3</text></svg>
<svg style="left:686px;top:632px" width="17" height="16" viewBox="0 0 17 16"><path d="M0.2 1.5 H15.9 M0.2 5.5 H15.9 M0.2 9.5 H6.5 M0.2 13.5 H6.5" stroke="#222" stroke-width="1.2"/><path d="M9.3 11.6 H15.9 M12.6 8.6 V14.6" stroke="#35b6e8" stroke-width="1.2"/></svg>
<svg style="left:718px;top:632px" width="17" height="16" viewBox="0 0 17 16"><path d="M6.7 3.6 H2 Q0.6 3.6 0.6 5 V13.2 Q0.6 14.6 2 14.6 H10.6 Q12 14.6 12 13.2 V9.2" fill="none" stroke="#4a4a4a" stroke-width="1.5"/><path d="M7.4 8.4 L15.2 0.7 M9 0.7 H15.4 V7.6" fill="none" stroke="#35b6e8" stroke-width="1.2"/></svg>
<svg style="left:749px;top:632px" width="18" height="16" viewBox="0 0 18 16"><path d="M3.6 12.4 H1.2 V3.5 H11.4 M8.3 0.4 L11.7 3.5 L8.3 6.6" fill="none" stroke="#222" stroke-width="1.2"/><path d="M14.5 3.5 H16.8 V12.4 H6.6 M9.8 9.4 L6.4 12.4 L9.8 15.4" fill="none" stroke="#35b6e8" stroke-width="1.2"/></svg>
<div class="cbc" style="left:1452px;top:634px"><svg style="left:0;top:0" width="12" height="12" viewBox="0 0 12 12"><path d="M2.3 6.4 L5.1 9.1 L10.2 2.7" fill="none" stroke="#fff" stroke-width="1.9" stroke-linecap="butt"/></svg></div>
<div class="t" style="left:1470.6px;top:632px;letter-spacing:-0.109px;">Активный (ctrl F10)</div>
<div class="cbc" style="left:9px;top:661px"><svg style="left:0;top:0" width="12" height="12" viewBox="0 0 12 12"><path d="M2.3 6.4 L5.1 9.1 L10.2 2.7" fill="none" stroke="#fff" stroke-width="1.9" stroke-linecap="butt"/></svg></div>
<div class="t" style="left:27.3px;top:659px;letter-spacing:-0.160px;">Расчитывать дни на складе регламентно</div>
<div class="cbc" style="left:9px;top:683px"><svg style="left:0;top:0" width="12" height="12" viewBox="0 0 12 12"><path d="M2.3 6.4 L5.1 9.1 L10.2 2.7" fill="none" stroke="#fff" stroke-width="1.9" stroke-linecap="butt"/></svg></div>
<div class="t" style="left:27.3px;top:681px;letter-spacing:-0.001px;">Учитывать только положит.остатки при расчете учетной цены</div>
<div class="hl" style="left:9px;top:711px;width:2px;"></div>
<div class="hl" style="left:129px;top:711px;width:1445px;"></div>
<svg style="left:16.0px;top:707.2px" width="9" height="9" viewBox="0 0 9 9"><circle cx="4.5" cy="4.5" r="4" fill="none" stroke="#a4a4a4" stroke-width="1"/><path d="M2.3 4.5 H6.7" stroke="#a4a4a4" stroke-width="1"/></svg>
<div class="lg" style="left:31.3px;top:705px;letter-spacing:-0.155px;">Акты реализации</div>
<div class="hl" style="left:9px;top:735px;width:2px;"></div>
<div class="hl" style="left:90px;top:735px;width:533px;"></div>
<svg style="left:16.0px;top:731.2px" width="9" height="9" viewBox="0 0 9 9"><circle cx="4.5" cy="4.5" r="4" fill="none" stroke="#a4a4a4" stroke-width="1"/><path d="M2.3 4.5 H6.7" stroke="#a4a4a4" stroke-width="1"/></svg>
<div class="lg" style="left:31.3px;top:729px;letter-spacing:-0.113px;">За период</div>
<div class="t" style="left:9px;top:755px;letter-spacing:-0.334px;">Дата с</div>
<div class="inp" style="left:47px;top:751px;width:52px;height:22px;"></div>
<div class="t" style="left:51.7px;top:755px;letter-spacing:-0.416px;">11.07.25</div>
<div class="tri" style="left:93px;top:767px;"></div>
<div class="t" style="left:102.9px;top:755px;letter-spacing:-0.054px;">Дата по</div>
<div class="inp" style="left:150px;top:751px;width:52px;height:22px;"></div>
<div class="t" style="left:154.7px;top:755px;letter-spacing:-0.416px;">11.07.25</div>
<div class="tri" style="left:196px;top:767px;"></div>
<div class="t" style="left:206.2px;top:755px;letter-spacing:-0.116px;">Наименование</div>
<div class="inp" style="left:293px;top:750px;width:155px;height:24px;border-color:#c8c8c8"></div>
<div class="t" style="left:301.2px;top:755px;width:126.30000000000001px;overflow:hidden;letter-spacing:0.047px;">"Маркет Фьюжен" ООО</div>
<svg style="left:434px;top:759.2px" width="10" height="7" viewBox="0 0 10 7"><path d="M0.9 0.9 L5 5 L9.1 0.9" fill="none" stroke="#111" stroke-width="2"/></svg>
<div class="btn" style="left:452px;top:751px;width:171px;height:22px;line-height:22px;letter-spacing:-0.180px;">Создать акты реализации</div>
<div class="hl" style="left:9px;top:787px;width:2px;"></div>
<div class="hl" style="left:143px;top:787px;width:1431px;"></div>
<svg style="left:16.0px;top:783.2px" width="9" height="9" viewBox="0 0 9 9"><circle cx="4.5" cy="4.5" r="4" fill="none" stroke="#a4a4a4" stroke-width="1"/><path d="M2.3 4.5 H6.7" stroke="#a4a4a4" stroke-width="1"/></svg>
<div class="lg" style="left:31.3px;top:781px;letter-spacing:-0.128px;">Предыдущий месяц</div>
<div class="btn" style="left:9px;top:802px;width:215px;height:22px;line-height:22px;letter-spacing:-0.186px;">Создать акты реализации (месяц)</div>
<div class="btn" style="left:228px;top:802px;width:241px;height:22px;line-height:22px;letter-spacing:-0.170px;">Создать акты реализации (полмесяца)</div>
<div class="hl" style="left:9px;top:830px;width:274px;"></div>
<div class="cbc" style="left:9px;top:836px"><svg style="left:0;top:0" width="12" height="12" viewBox="0 0 12 12"><path d="M2.3 6.4 L5.1 9.1 L10.2 2.7" fill="none" stroke="#fff" stroke-width="1.9" stroke-linecap="butt"/></svg></div>
<div class="t" style="left:27.3px;top:834px;letter-spacing:-0.050px;">Проверять на превышение остатка по маркам</div>
<div class="hl" style="left:7px;top:855px;width:1569px;"></div>
<div class="btn" style="left:9px;top:860px;width:42px;height:22px;line-height:22px;"></div>
<div class="a" style="left:29px;top:867.5px;width:1.7px;height:1.7px;background:#111"></div>
<div class="a" style="left:29px;top:871.3px;width:1.7px;height:1.7px;background:#111"></div>
<div class="a" style="left:29px;top:874.9px;width:1.7px;height:1.7px;background:#111"></div>
<div class="btn" style="left:1151px;top:860px;width:42px;height:22px;line-height:22px;"></div>
<svg style="left:1166px;top:865px" width="12" height="12" viewBox="0 0 12 12"><path d="M0.7 4.6 A5.5 5.5 0 0 1 10.2 3.3" fill="none" stroke="#222" stroke-width="1.2"/><path d="M12 0.1 V5.1 L7.2 4.4 Z" fill="#222"/><path d="M11.3 7.4 A5.5 5.5 0 0 1 1.8 8.8" fill="none" stroke="#35b6e8" stroke-width="1.2"/><path d="M0.1 7.1 V12 L4.8 7.7 Z" fill="#35b6e8"/></svg>
<div class="btn" style="left:1197px;top:860px;width:106px;height:22px;line-height:22px;"></div>
<svg style="left:1212px;top:865px" width="12" height="12" viewBox="0 0 12 12"><path d="M2.2 0.7 H8.6 L11.3 3.4 V9.8 Q11.3 11.3 9.8 11.3 H2.2 Q0.7 11.3 0.7 9.8 V2.2 Q0.7 0.7 2.2 0.7 Z" fill="none" stroke="#444" stroke-width="1.3"/><path d="M2.6 9.2 V6.5 H9.4 V9.2" fill="none" stroke="#35b6e8" stroke-width="1.2"/></svg>
<div class="t" style="left:1230.5px;top:864px;letter-spacing:-0.260px;">Сохранить</div>
<div class="btn" style="left:1307px;top:860px;width:102px;height:22px;line-height:22px;"></div>
<svg style="left:1322px;top:865px" width="12" height="12" viewBox="0 0 12 12"><path d="M0 2.5 H11.8 M4.3 2.3 V0.6 H7.7 V2.3" fill="none" stroke="#35b6e8" stroke-width="1.1"/><path d="M2.9 4 V10 Q2.9 11.3 4.2 11.3 H7.8 Q9.1 11.3 9.1 10 V4" fill="none" stroke="#222" stroke-width="1.3"/></svg>
<div class="t" style="left:1340.5px;top:864px;letter-spacing:-0.180px;">Отменить</div>
<div class="btn" style="left:1413px;top:860px;width:64px;height:22px;line-height:22px;"></div>
<svg style="left:1427px;top:865px" width="14" height="12" viewBox="0 0 14 12"><path d="M1 7 L4.5 10.6 L12.6 1.3" fill="none" stroke="#222" stroke-width="1.3"/></svg>
<div class="t" style="left:1446.4px;top:864px;letter-spacing:-0.772px;">OK</div>
<div class="btn" style="left:1481px;top:860px;width:93px;height:22px;line-height:22px;"></div>
<svg style="left:1497px;top:866px" width="10" height="10" viewBox="0 0 10 10"><path d="M0.3 0.3 L9.7 9.7 M9.7 0.3 L0.3 9.7" stroke="#222" stroke-width="1.25"/></svg>
<div class="t" style="left:1514.1px;top:864px;letter-spacing:-0.146px;">Закрыть</div>
</body></html>
